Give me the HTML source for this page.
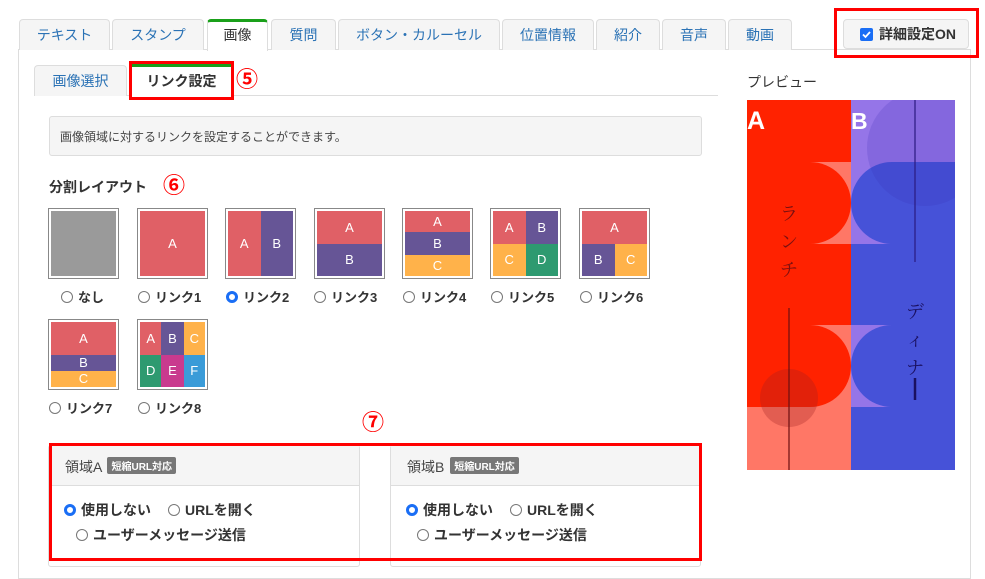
<!DOCTYPE html>
<html><head><meta charset="utf-8"><style>
*{box-sizing:border-box;margin:0;padding:0}
body{width:985px;height:573px;position:relative;overflow:hidden;background:#fff;font-family:"Liberation Sans","Noto Sans CJK JP",sans-serif;color:#333}
.a{position:absolute}
.tab{position:absolute;top:19px;height:31px;border:1px solid #ddd;border-bottom:none;border-radius:4px 4px 0 0;background:#f5f5f5;color:#2a72b5;font-size:14px;text-align:center;line-height:30px}
.tab.on{background:#fff;color:#333;border-top:3px solid #1aa01a;line-height:27px;height:32px}
.red{position:absolute;border:3px solid #f00}
.num{position:absolute;color:#f00;font-size:22px;line-height:22px;font-weight:bold}
.th{position:absolute;width:71px;height:71px;border:1px solid #888;padding:2px;background:#fff}
.th .in{width:100%;height:100%;position:relative;overflow:hidden}
.th .in div{position:absolute;color:#fff;font-size:13px;display:flex;align-items:center;justify-content:center}
.lb{position:absolute;font-size:13px;font-weight:bold;display:flex;align-items:center;gap:5px}
.lb.b{font-size:14px}
.rd{width:12px;height:12px;border:1px solid #777;border-radius:50%;background:#fff;display:inline-block}
.rd.on{border:3.5px solid #1a6ef5}
.card{position:absolute;top:445px;height:122px;border:1px solid #ddd;border-radius:3px;background:#fff}
.card .hd{height:40px;background:#f5f5f5;border-bottom:1px solid #ddd;font-size:14px;padding:11px 16px;color:#444}
.badge{display:inline-block;background:#777;color:#fff;font-size:10px;font-weight:bold;padding:1px 4px;border-radius:2px;vertical-align:2px;margin-left:2px}
</style></head><body>
<div class="a" style="left:18px;top:49px;width:953px;height:530px;border:1px solid #ddd"></div>
<div class="tab" style="left:19px;width:91px">テキスト</div>
<div class="tab" style="left:112px;width:92px">スタンプ</div>
<div class="tab on" style="left:207px;width:61px">画像</div>
<div class="tab" style="left:271px;width:65px">質問</div>
<div class="tab" style="left:338px;width:162px">ボタン・カルーセル</div>
<div class="tab" style="left:502px;width:92px">位置情報</div>
<div class="tab" style="left:596px;width:64px">紹介</div>
<div class="tab" style="left:662px;width:64px">音声</div>
<div class="tab" style="left:728px;width:64px">動画</div>
<div class="a" style="left:843px;top:19px;width:126px;height:30px;border:1px solid #ddd;border-radius:4px;background:#f5f5f5;font-size:14px;font-weight:bold;line-height:28px;padding-left:16px;color:#333"><svg width="13" height="13" style="vertical-align:-2px;margin-right:6px"><rect width="13" height="13" rx="2" fill="#1a6ef5"/><path d="M3 6.5L5.5 9L10 4" stroke="#fff" stroke-width="1.8" fill="none"/></svg>詳細設定ON</div>
<div class="red" style="left:834px;top:8px;width:145px;height:50px"></div>

<div class="a" style="left:34px;top:95px;width:684px;border-top:1px solid #ddd"></div>
<div class="a" style="left:34px;top:65px;width:93px;height:31px;border:1px solid #ddd;border-bottom:none;border-radius:4px 4px 0 0;background:#f5f5f5;color:#2a72b5;font-size:14px;text-align:center;line-height:30px">画像選択</div>
<div class="a" style="left:130px;top:64px;width:103px;height:32px;background:#fff;border-top:3px solid #1aa01a;font-size:14px;font-weight:bold;text-align:center;line-height:28px;color:#333">リンク設定</div>
<div class="red" style="left:129px;top:61px;width:105px;height:39px"></div>
<div class="num" style="left:236px;top:69px">⑤</div>

<div class="a" style="left:49px;top:116px;width:653px;height:40px;border:1px solid #ddd;border-radius:3px;background:#f5f5f5;font-size:12px;padding:11px 10px;color:#444">画像領域に対するリンクを設定することができます。</div>
<div class="a" style="left:49px;top:177px;font-size:14px;font-weight:bold">分割レイアウト</div>
<div class="num" style="left:163px;top:175px">⑥</div>

<div class="th" style="left:48px;top:208px"><div class="in" style="background:#9a9a9a"></div></div>
<div class="th" style="left:137px;top:208px"><div class="in"><div style="left:0;top:0;width:100%;height:100%;background:#e06066">A</div></div></div>
<div class="th" style="left:225px;top:208px"><div class="in"><div style="left:0;top:0;width:50%;height:100%;background:#e06066">A</div><div style="left:50%;top:0;width:50%;height:100%;background:#665596">B</div></div></div>
<div class="th" style="left:314px;top:208px"><div class="in"><div style="left:0;top:0;width:100%;height:50%;background:#e06066">A</div><div style="left:0;top:50%;width:100%;height:50%;background:#665596">B</div></div></div>
<div class="th" style="left:402px;top:208px"><div class="in"><div style="left:0;top:0;width:100%;height:33%;background:#e06066">A</div><div style="left:0;top:33%;width:100%;height:34%;background:#665596">B</div><div style="left:0;top:67%;width:100%;height:33%;background:#ffb24a">C</div></div></div>
<div class="th" style="left:490px;top:208px"><div class="in"><div style="left:0;top:0;width:50%;height:50%;background:#e06066">A</div><div style="left:50%;top:0;width:50%;height:50%;background:#665596">B</div><div style="left:0;top:50%;width:50%;height:50%;background:#ffb24a">C</div><div style="left:50%;top:50%;width:50%;height:50%;background:#2e9a70">D</div></div></div>
<div class="th" style="left:579px;top:208px"><div class="in"><div style="left:0;top:0;width:100%;height:50%;background:#e06066">A</div><div style="left:0;top:50%;width:50%;height:50%;background:#665596">B</div><div style="left:50%;top:50%;width:50%;height:50%;background:#ffb24a">C</div></div></div>
<div class="th" style="left:48px;top:319px"><div class="in"><div style="left:0;top:0;width:100%;height:50%;background:#e06066">A</div><div style="left:0;top:50%;width:100%;height:25%;background:#665596">B</div><div style="left:0;top:75%;width:100%;height:25%;background:#ffb24a">C</div></div></div>
<div class="th" style="left:137px;top:319px"><div class="in"><div style="left:0;top:0;width:33%;height:50%;background:#e06066">A</div><div style="left:33%;top:0;width:34%;height:50%;background:#665596">B</div><div style="left:67%;top:0;width:33%;height:50%;background:#ffb24a">C</div><div style="left:0;top:50%;width:33%;height:50%;background:#2e9a70">D</div><div style="left:33%;top:50%;width:34%;height:50%;background:#c93a8e">E</div><div style="left:67%;top:50%;width:33%;height:50%;background:#3a9bd8">F</div></div></div>

<div class="lb" style="left:61px;top:287px"><span class="rd"></span>なし</div>
<div class="lb" style="left:138px;top:287px"><span class="rd"></span>リンク1</div>
<div class="lb" style="left:226px;top:287px"><span class="rd on"></span>リンク2</div>
<div class="lb" style="left:314px;top:287px"><span class="rd"></span>リンク3</div>
<div class="lb" style="left:403px;top:287px"><span class="rd"></span>リンク4</div>
<div class="lb" style="left:491px;top:287px"><span class="rd"></span>リンク5</div>
<div class="lb" style="left:580px;top:287px"><span class="rd"></span>リンク6</div>
<div class="lb" style="left:49px;top:398px"><span class="rd"></span>リンク7</div>
<div class="lb" style="left:138px;top:398px"><span class="rd"></span>リンク8</div>
<div class="num" style="left:362px;top:412px">⑦</div>

<div class="card" style="left:48px;width:312px"><div class="hd">領域A <span class="badge">短縮URL対応</span></div></div>
<div class="card" style="left:390px;width:311px"><div class="hd">領域B <span class="badge">短縮URL対応</span></div></div>
<div class="lb b" style="left:64px;top:500px"><span class="rd on"></span>使用しない</div>
<div class="lb b" style="left:168px;top:500px"><span class="rd"></span>URLを開く</div>
<div class="lb b" style="left:76px;top:525px"><span class="rd"></span>ユーザーメッセージ送信</div>
<div class="lb b" style="left:406px;top:500px"><span class="rd on"></span>使用しない</div>
<div class="lb b" style="left:510px;top:500px"><span class="rd"></span>URLを開く</div>
<div class="lb b" style="left:417px;top:525px"><span class="rd"></span>ユーザーメッセージ送信</div>
<div class="red" style="left:49px;top:443px;width:653px;height:118px"></div>

<div class="a" style="left:747px;top:72px;font-size:14px;color:#333">プレビュー</div>
<svg class="a" style="left:747px;top:100px" width="208" height="370" viewBox="0 0 208 370">
<rect x="0" y="0" width="104" height="370" fill="#ff7766"/>
<rect x="0" y="0" width="104" height="62" fill="#ff2200"/>
<rect x="0" y="144" width="104" height="81" fill="#ff2200"/>
<path d="M0 62H63A41 41 0 0 1 63 144H0Z" fill="#ff2200"/>
<path d="M0 225H63A41 41 0 0 1 63 307H0Z" fill="#ff2200"/>
<circle cx="42" cy="298" r="29" fill="#a02020" opacity="0.3"/>
<rect x="104" y="0" width="104" height="370" fill="#4652d8"/>
<rect x="104" y="0" width="104" height="62" fill="#9575e8"/>
<rect x="104" y="62" width="40" height="82" fill="#9575e8"/>
<rect x="104" y="225" width="40" height="82" fill="#9575e8"/>
<circle cx="145" cy="103" r="41" fill="#4652d8"/>
<circle cx="145" cy="266" r="41" fill="#4652d8"/>
<rect x="144" y="62" width="64" height="82" fill="#4652d8"/>
<rect x="144" y="225" width="64" height="82" fill="#4652d8"/>
<circle cx="178" cy="48" r="58" fill="#3a2ab0" opacity="0.18"/>
<line x1="168" y1="0" x2="168" y2="162" stroke="#2a1a80" stroke-width="1.2"/>
<line x1="42" y1="208" x2="42" y2="370" stroke="#6a1010" stroke-width="1.2"/>
<text x="0" y="29" fill="#fff" font-size="25" font-weight="bold" font-family="Liberation Sans,sans-serif">A</text>
<text x="104" y="29" fill="#fff" font-size="23" font-weight="bold" font-family="Liberation Sans,sans-serif">B</text>
<text x="33" y="120" fill="#7a1010" font-size="18" font-family="Noto Serif CJK SC,serif">ラ</text>
<text x="33" y="148" fill="#7a1010" font-size="18" font-family="Noto Serif CJK SC,serif">ン</text>
<text x="33" y="176" fill="#7a1010" font-size="18" font-family="Noto Serif CJK SC,serif">チ</text>
<text x="159" y="218" fill="#1a1060" font-size="18" font-family="Noto Serif CJK SC,serif">デ</text>
<text x="159" y="246" fill="#1a1060" font-size="18" font-family="Noto Serif CJK SC,serif">ィ</text>
<text x="159" y="274" fill="#1a1060" font-size="18" font-family="Noto Serif CJK SC,serif">ナ</text>
<line x1="168" y1="278" x2="168" y2="300" stroke="#1a1060" stroke-width="2.5"/>
</svg>
</body></html>
